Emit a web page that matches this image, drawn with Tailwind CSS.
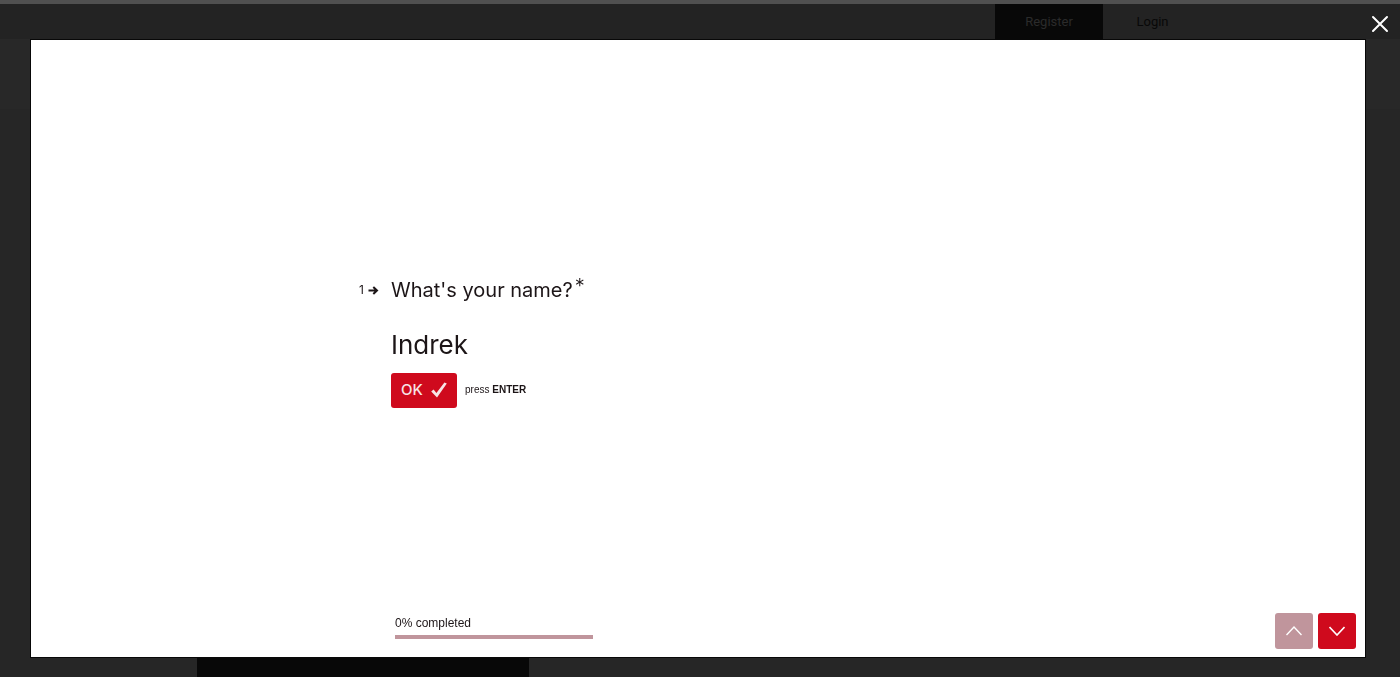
<!DOCTYPE html>
<html lang="en">
<head>
<meta charset="utf-8">
<meta name="viewport" content="width=device-width, initial-scale=1">
<title>What's your name?</title>
<script src="https://cdn.jsdelivr.net/npm/@tailwindcss/browser@4"></script>
</head>
<body class="flex h-screen flex-col overflow-hidden bg-[#262626] font-['Inter',sans-serif] text-[#1c1517]">
  <!-- Dimmed page behind the dialog -->
  <div class="h-1 shrink-0 bg-[#505050]"></div>
  <header class="flex h-[35px] shrink-0 justify-end bg-[#232323] pr-[198px] font-['Roboto',sans-serif] text-[13px]">
    <a href="#register" class="flex w-[108px] items-center justify-center bg-[#080808] text-[#2b2b2b]">Register</a>
    <a href="#login" class="flex w-[99px] items-center justify-center text-[#080808]">Login</a>
  </header>
  <div class="h-[70px] shrink-0 bg-[#282828]"></div>
  <div class="mt-auto flex h-5 shrink-0 pl-[197px]">
    <div class="w-[332px] bg-[#080808]"></div>
  </div>

  <!-- Dialog -->
  <button type="button" aria-label="Close" class="fixed top-[14px] right-[10px] flex size-5 items-center justify-center text-white">
    <svg class="size-5" viewBox="0 0 20 20" fill="none" stroke="currentColor" stroke-width="2" stroke-linecap="round"><path d="M3 3l14 14M17 3L3 17"/></svg>
  </button>
  <form role="dialog" aria-label="Survey" class="fixed top-10 right-[35px] bottom-5 left-[31px] flex flex-col bg-white shadow-[0_0_0_1px_#080808]">
    <main class="flex flex-1 flex-col pt-[236px] pl-[328px]">
      <div class="flex h-7 items-center">
        <span class="flex w-8 items-center gap-1 text-xs">1
          <svg class="h-[9px] w-[11px]" viewBox="0 0 11 9" fill="none" stroke="currentColor" stroke-width="2"><path d="M0.5 4.5h8M5.3 1l3.7 3.5L5.3 8"/></svg>
        </span>
        <label for="name" class="flex text-[20px] leading-7">What's your name?<span class="-mt-1 ml-[2px] text-[20px] font-light">*</span></label>
      </div>
      <input id="name" type="text" value="Indrek" required class="mt-[22px] ml-8 h-9 w-[640px] text-[26px] outline-none">
      <div class="mt-[11px] ml-8 flex items-center gap-2">
        <button type="submit" class="flex h-[35px] w-[66px] items-center justify-center gap-2 rounded-[3px] bg-[#cf0a1d] text-[15px] font-medium text-[#f7e4e6]">OK
          <svg class="mb-[2px] h-4 w-4" viewBox="0 0 16 16" fill="currentColor"><path d="M.2 9.600 2.600 7.600 5.400 11 13.400 .4 15.800 1.400 6 15.600Z"/></svg>
        </button>
        <span class="mb-[2px] font-['Liberation_Sans',sans-serif] text-[10px]">press <strong>ENTER</strong></span>
      </div>
    </main>
    <footer class="flex items-end justify-between pr-[9px] pb-2 pl-[364px]">
      <div class="mb-[10px] w-[198px] font-['Liberation_Sans',sans-serif] text-xs">
        <div id="progress-label" class="mb-1 leading-4">0% completed</div>
        <div role="progressbar" aria-labelledby="progress-label" aria-valuenow="0" class="h-1 bg-[#c0959c]"></div>
      </div>
      <div class="flex gap-[5px] text-white">
        <button type="button" aria-label="Previous question" class="flex h-9 w-[38px] items-center justify-center rounded-[3px] bg-[#c0959c]">
          <svg class="h-[10px] w-4" viewBox="0 0 16 10" fill="none" stroke="currentColor" stroke-width="1.4"><path d="M.5 9 8 1 15.500 9"/></svg>
        </button>
        <button type="button" aria-label="Next question" class="flex h-9 w-[38px] items-center justify-center rounded-[3px] bg-[#cf0a1d]">
          <svg class="h-[10px] w-4" viewBox="0 0 16 10" fill="none" stroke="currentColor" stroke-width="1.6"><path d="M.5 1 8 9 15.500 1"/></svg>
        </button>
      </div>
    </footer>
  </form>
</body>
</html>
